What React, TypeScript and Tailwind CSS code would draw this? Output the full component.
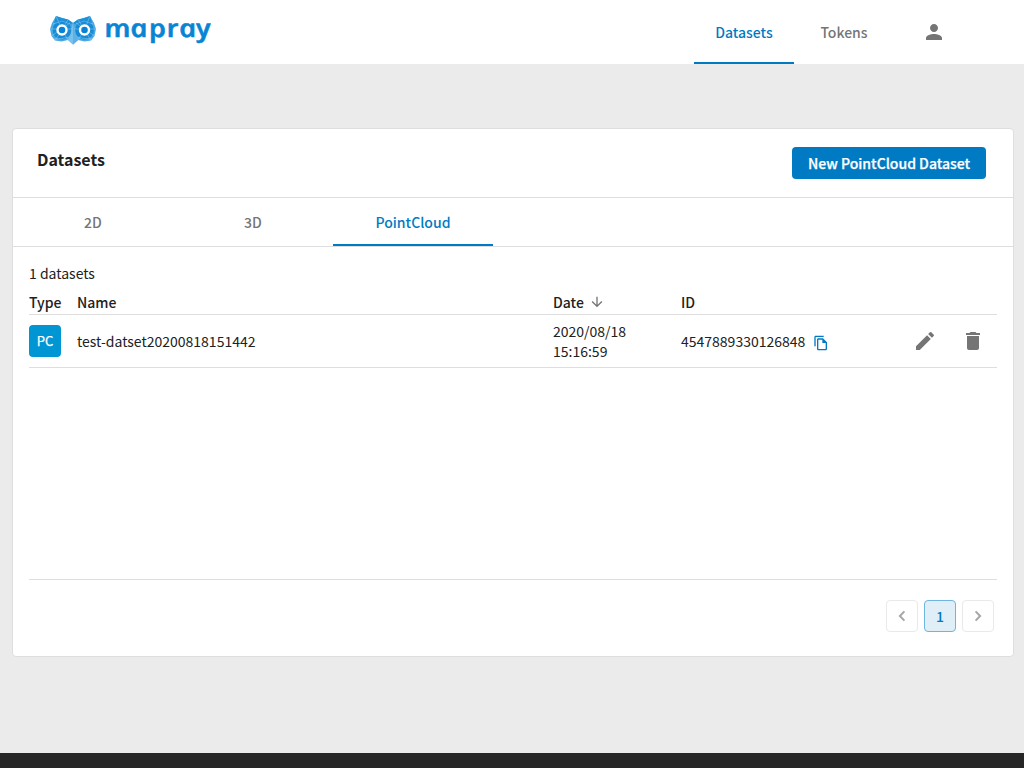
import type { ReactNode } from "react";
import {
  MdArrowDownward,
  MdDelete,
  MdEdit,
  MdOutlineFileCopy,
  MdPerson,
} from "react-icons/md";

function Owl() {
  return (
    <svg width="46" height="30" viewBox="0 0 46 30" className="block">
      <path d="M6 1 L12 3 L18 4.5 L23 8 L28 4.5 L34 3 L40 1 L44 8 L46 14 L44.5 21 L41 25.5 L34.5 26.5 L28 25 L23 29.5 L18 25 L11.5 26.5 L5 25.5 L1.5 21 L0 14 L2 8 Z" fill="#4aa9e2" />
      <path d="M6 1 L12 3 L18 4.5 L23 8 L19 10 L12 7 L4 8 Z M40 1 L34 3 L28 4.5 L23 8 L27 10 L34 7 L42 8 Z" fill="#1c90d9" />
      <path d="M23 8 L18 25 L23 29.5 L28 25 Z" fill="#79c0eb" />
      <path d="M23 8 L23 29.5 L28 25 Z" fill="#5fb0e3" />
      <circle cx="12" cy="15" r="9.4" fill="#0e86d4" fillOpacity="0.85" />
      <circle cx="34.5" cy="15" r="9.4" fill="#0e86d4" fillOpacity="0.85" />
      <path
        d="M6 1 L12 15 L18 4.5 M0 14 H22 M1.5 21 L20 8 M5 25.5 L12 15 L18 25 M3 9 L12 6 L20 9 M4 24 L12 23.5 L19 22 M40 1 L34.5 15 L28 4.5 M46 14 H24 M44.5 21 L26 8 M41 25.5 L34.5 15 L28 25 M43 9 L34 6 L26 9 M42 24 L34 23.5 L27 22"
        fill="none"
        stroke="#a3d5f3"
        strokeWidth="0.45"
      />
      <circle cx="12" cy="15" r="4.5" fill="#0783d3" stroke="#fff" strokeWidth="2.4" />
      <circle cx="34.5" cy="15" r="4.5" fill="#0783d3" stroke="#fff" strokeWidth="2.4" />
    </svg>
  );
}

function Logo() {
  return (
    <div className="flex items-start pl-[50px] pt-[15px]">
      <Owl />
      <svg width="124" height="44" viewBox="0 0 124 44" className="ml-2 block overflow-visible">
        <g transform="translate(0 22) scale(1.18 1) skewX(12)">
          <text
            x="1.6 23.8 39.4 54.4 65 79.6"
            y="0"
            fill="#0784d4"
            stroke="#0784d4"
            strokeWidth="0.5"
            strokeLinejoin="round"
            className="font-['Open_Sans',sans-serif] text-[25px] font-semibold italic"
          >
            mapray
          </text>
        </g>
      </svg>
    </div>
  );
}

function Chevron({ points }: { points: string }) {
  return (
    <svg width="12" height="12" viewBox="0 0 12 12" fill="none" stroke="#a6a6a6" strokeWidth="2">
      <polyline points={points} />
    </svg>
  );
}

function NavTab({ active, children }: { active?: boolean; children: ReactNode }) {
  return (
    <div
      className={
        active
          ? "flex h-16 w-[100px] items-center justify-center border-b-2 border-[#007bc3] pt-0.5 font-medium text-[#007bc3]"
          : "flex h-16 w-[100px] items-center justify-center border-b-2 border-transparent pt-0.5 font-medium text-[#757575]"
      }
    >
      {children}
    </div>
  );
}

function KindTab({ active, children }: { active?: boolean; children: ReactNode }) {
  return (
    <div
      className={
        active
          ? "flex h-12 w-40 items-center justify-center border-b-2 border-[#007bc3] pt-0.5 font-medium text-[#007bc3]"
          : "flex h-12 w-40 items-center justify-center border-b-2 border-transparent pt-0.5 font-medium text-[#757575]"
      }
    >
      {children}
    </div>
  );
}

export default function App() {
  return (
    <div className="flex h-screen flex-col overflow-hidden bg-[#ebebeb] font-['Noto_Sans_CJK_JP',sans-serif] text-sm leading-5 text-[#212121]">
      <header className="flex h-16 shrink-0 justify-between bg-white">
        <Logo />
        <nav className="flex pr-[78px]">
          <NavTab active>Datasets</NavTab>
          <NavTab>Tokens</NavTab>
          <div className="ml-7 flex h-16 w-6 items-center">
            <MdPerson size={24} color="#757575" />
          </div>
        </nav>
      </header>

      <main className="flex-1 pl-3 pr-2.5 pt-16">
        <section className="flex h-[529px] flex-col rounded border border-[#dedede] bg-white">
          <div className="flex h-[69px] items-start justify-between border-b border-[#dedede] pl-6 pr-[27px] pt-[18px]">
            <h1 className="text-base leading-6 font-bold">Datasets</h1>
            <button className="h-8 rounded bg-[#007bc3] px-4 font-medium text-white [-webkit-text-stroke:0.25px_white]">
              New PointCloud Dataset
            </button>
          </div>
          <div className="flex h-[49px] shrink-0 border-b border-[#dedede]">
            <KindTab>2D</KindTab>
            <KindTab>3D</KindTab>
            <KindTab active>PointCloud</KindTab>
          </div>

          <div className="flex flex-col px-4 pt-4">
            <p>1 datasets</p>
            <div className="mt-[9px] grid h-[23px] grid-cols-[48px_476px_128px_316px] border-b border-[#dedede] font-medium">
              <span>Type</span>
              <span>Name</span>
              <span className="flex items-start gap-[5px]">
                Date
                <MdArrowDownward size={16} color="#757575" className="mt-0.5" />
              </span>
              <span>ID</span>
            </div>
            <div className="grid h-[53px] grid-cols-[48px_476px_128px_222px_48px_46px] items-center border-b border-[#dedede]">
              <span className="flex size-8 items-center justify-center rounded bg-[#0095d3] text-[13px] text-white [-webkit-text-stroke:0.25px_white]">
                PC
              </span>
              <span>test-datset20200818151442</span>
              <span className="pr-8">2020/08/18 15:16:59</span>
              <span className="flex items-center gap-2">
                4547889330126848
                <MdOutlineFileCopy size={16} color="#007bc3" className="mt-[3px]" />
              </span>
              <MdEdit size={24} color="#757575" className="ml-2.5" />
              <MdDelete size={24} color="#757575" className="ml-2.5" />
            </div>
            <div className="h-[212px] border-b border-[#dedede]" />
            <div className="mt-5 mr-[3px] flex justify-end gap-1.5">
              <button className="flex size-8 items-center justify-center rounded border border-[#e9e9e9]">
                <Chevron points="8.4,1.4 3.9,6 8.4,10.6" />
              </button>
              <button className="flex size-8 items-center justify-center rounded border border-[#70b5df] bg-[#e0eef7] font-medium text-[#007bc3]">
                1
              </button>
              <button className="flex size-8 items-center justify-center rounded border border-[#e9e9e9]">
                <Chevron points="3.6,1.4 8.1,6 3.6,10.6" />
              </button>
            </div>
          </div>
        </section>
      </main>
      <footer className="h-[15px] shrink-0 bg-[#262626]" />
    </div>
  );
}
